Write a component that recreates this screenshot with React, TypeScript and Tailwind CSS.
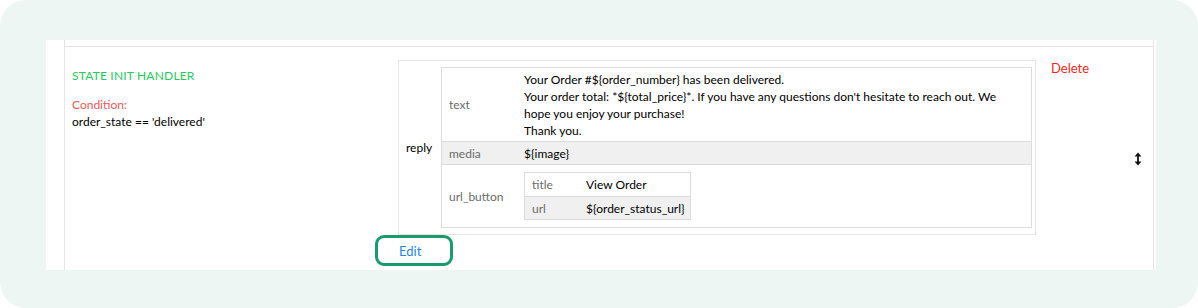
import React from "react";

const KEY = "text-[#6b6b6b]";

function UpDownArrow() {
  return (
    <svg width="8" height="14" viewBox="0 0 8 14" className="block">
      <path d="M4 0.5 L7.5 4.5 H4.9 V9.5 H7.5 L4 13.5 L0.5 9.5 H3.1 V4.5 H0.5 Z" fill="#111" />
    </svg>
  );
}

export default function App() {
  return (
    <div className="w-[1198px] h-[308px] bg-white font-['Lato',sans-serif] text-[12px] text-black">
      <div className="h-full rounded-[26px] bg-[#edf6f2] pt-[40px] pl-[46px]">
        <div className="w-[1110px] h-[230px] bg-white pl-[18px] pr-[2px]">
          <div className="h-full border-x border-[#e3e3e8] pt-[6px]">
            <div className="h-full border-t border-[#e3e3e8] flex">
              {/* handler info */}
              <div className="w-[333px] pl-[7px] pt-[20px] leading-[17px]">
                <div className="text-[#25cc5c] tracking-[0.2px]">STATE INIT HANDLER</div>
                <div className="mt-[12px] text-[#f25757]">Condition:</div>
                <div>{"order_state == 'delivered'"}</div>
              </div>

              {/* reply block */}
              <div className="w-[638px] pt-[13px]">
                <div className="border border-[#e6e6e6] flex items-center pl-[7px] pr-[3px] pt-[6px] pb-[6px]">
                  <div className="w-[35px]">reply</div>
                  <div className="flex-1 border border-[#dcdcdc] leading-[17px]">
                    <div className="flex items-center">
                      <div className={`w-[74px] pl-[7px] ${KEY}`}>text</div>
                      <div className="flex-1 pl-[8px] pr-[8px] pt-[3px] pb-[2px]">
                        <div>{"Your Order #${order_number} has been delivered."}</div>
                        <div>
                          {
                            "Your order total: *${total_price}*. If you have any questions don't hesitate to reach out. We hope you enjoy your purchase!"
                          }
                        </div>
                        <div>Thank you.</div>
                      </div>
                    </div>
                    <div className="flex items-center h-[24px] bg-[#f0f0f0] border-y border-[#dcdcdc]">
                      <div className={`w-[74px] pl-[7px] ${KEY}`}>media</div>
                      <div className="pl-[8px]">{"${image}"}</div>
                    </div>
                    <div className="flex items-center py-[7px]">
                      <div className={`w-[74px] pl-[7px] ${KEY}`}>url_button</div>
                      <div className="ml-[8px] w-[167px] border border-[#dcdcdc]">
                        <div className="flex items-center h-[23px]">
                          <div className={`w-[61px] pl-[7px] ${KEY}`}>title</div>
                          <div>View Order</div>
                        </div>
                        <div className="flex items-center h-[23px] bg-[#f0f0f0] border-t border-[#dcdcdc]">
                          <div className={`w-[61px] pl-[7px] ${KEY}`}>url</div>
                          <div>{"${order_status_url}"}</div>
                        </div>
                      </div>
                    </div>
                  </div>
                </div>
                <div className="relative w-[24px] ml-[1px] mt-[8px] leading-[16px] text-[13px] text-[#1e88f0]">
                  Edit
                  <div className="absolute left-[-24px] top-[-8px] w-[78px] h-[31px] rounded-[9px] border-[3px] border-[#1a9b6e]" />
                </div>
              </div>

              {/* actions */}
              <div className="flex-1 pl-[15px] pt-[13px] flex">
                <div className="text-[13px] leading-[16px] text-[#ff1f1f]">Delete</div>
                <div className="ml-auto mr-[11px] mt-[92px]">
                  <UpDownArrow />
                </div>
              </div>
            </div>
          </div>
        </div>
      </div>
    </div>
  );
}
